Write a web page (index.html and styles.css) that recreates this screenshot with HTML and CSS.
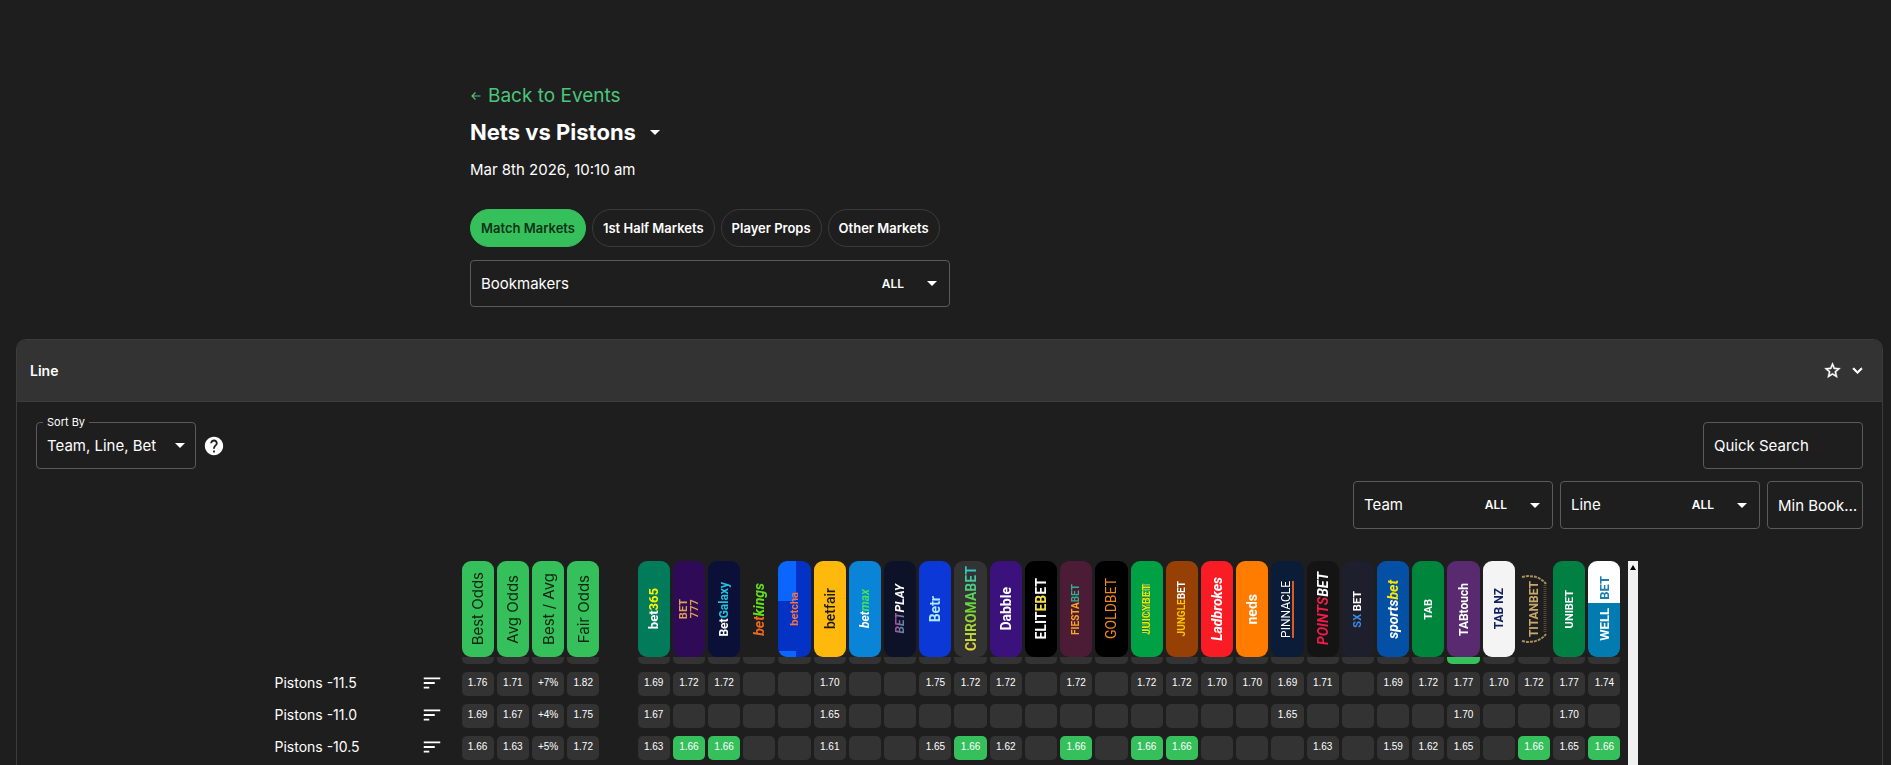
FILE: index.html
```html
<!DOCTYPE html>
<html lang="en">

<head>
    <meta charset="UTF-8">
    <meta name="viewport" content="width=device-width, initial-scale=1.0">
    <title>Nets vs Pistons</title>
    <link rel="stylesheet" href="styles.css">
</head>

<body>
    <header class="event">
        <a class="back" href="#">
            <svg width="12" height="12" viewBox="0 0 12 12"><path d="M10.5 6H2M5.5 2.5L2 6l3.5 3.5" fill="none" stroke="currentColor" stroke-width="1.2"/></svg>
            Back to Events
        </a>
        <h1>Nets vs Pistons
            <button class="icon-btn" aria-label="Change event"><svg class="caret" viewBox="0 0 10 5"><path d="M0 0h10L5 5z"/></svg></button>
        </h1>
        <div class="date">Mar 8th 2026, 10:10 am</div>
        <nav class="tabs">
            <button class="tab active">Match Markets</button>
            <button class="tab">1st Half Markets</button>
            <button class="tab">Player Props</button>
            <button class="tab">Other Markets</button>
        </nav>
        <button class="field bookmakers"><span>Bookmakers</span><b>ALL</b><svg class="caret" viewBox="0 0 10 5"><path d="M0 0h10L5 5z"/></svg></button>
    </header>

    <section class="panel">
        <div class="panel-head">
            <h2>Line</h2>
            <button class="icon-btn" aria-label="Favourite"><svg width="19" height="19" viewBox="0 0 24 24"><path fill="currentColor" stroke="currentColor" stroke-width=".5" d="M22 9.24l-7.19-.62L12 2 9.19 8.63 2 9.24l5.46 4.73L5.82 21 12 17.27 18.18 21l-1.63-7.03L22 9.24zM12 15.4l-3.76 2.27 1-4.28-3.32-2.88 4.38-.38L12 6.1l1.71 4.04 4.38.38-3.32 2.88 1 4.28L12 15.4z"/></svg></button>
            <button class="icon-btn" aria-label="Collapse"><svg width="19" height="19" viewBox="0 0 24 24"><path fill="currentColor" stroke="currentColor" d="M7.41 8.59L12 13.17l4.59-4.58L18 10l-6 6-6-6z"/></svg></button>
        </div>

        <div class="toolbar">
            <div class="sort">
                <label for="sort">Sort By</label>
                <select id="sort" class="field">
                    <option>Team, Line, Bet</option>
                </select>
                <svg class="caret" viewBox="0 0 10 5"><path d="M0 0h10L5 5z"/></svg>
            </div>
            <button class="icon-btn" aria-label="Help"><svg width="22" height="22" viewBox="0 0 24 24"><path fill="currentColor" d="M12 2C6.48 2 2 6.48 2 12s4.48 10 10 10 10-4.48 10-10S17.52 2 12 2zm1 17h-2v-2h2v2zm2.07-7.75l-.9.92C13.45 12.9 13 13.5 13 15h-2v-.5c0-1.1.45-2.1 1.17-2.83l1.24-1.26c.37-.36.59-.86.59-1.41 0-1.1-.9-2-2-2s-2 .9-2 2H8c0-2.21 1.79-4 4-4s4 1.79 4 4c0 .88-.36 1.68-.93 2.25z"/></svg></button>
            <input class="field search" type="text" placeholder="Quick Search" aria-label="Quick Search">
        </div>

        <div class="filters">
            <button class="field filter"><span>Team</span><b>ALL</b><svg class="caret" viewBox="0 0 10 5"><path d="M0 0h10L5 5z"/></svg></button>
            <button class="field filter"><span>Line</span><b>ALL</b><svg class="caret" viewBox="0 0 10 5"><path d="M0 0h10L5 5z"/></svg></button>
            <input class="field min" type="text" placeholder="Min Bookmakers" aria-label="Min Bookmakers">
        </div>

        <div class="odds">
            <table>
                <thead>
                    <tr>
                        <td></td>
                        <td></td>
                        <th class="stat"><span>Best Odds</span></th>
                        <th class="stat"><span>Avg Odds</span></th>
                        <th class="stat"><span>Best / Avg</span></th>
                        <th class="stat"><span>Fair Odds</span></th>
                        <td></td>
                        <th class="bet365"><span class="s13">bet<i>365</i></span></th>
                        <th class="bet777"><span class="s11">BET<br>777</span></th>
                        <th class="betgalaxy"><span class="s12">Bet<i>Galaxy</i></span></th>
                        <th class="betkings"><span class="s14 slant">bet<i>kings</i></span></th>
                        <th class="betcha"><span class="s11">betcha</span></th>
                        <th class="betfair"><span class="s14">betfair</span></th>
                        <th class="betmax"><span class="s12 slant">bet<i>max</i></span></th>
                        <th class="betplay"><span class="s12 slant"><i>BET</i>PLAY</span></th>
                        <th class="betr"><span class="s14">Betr</span></th>
                        <th class="chromabet"><span class="s14">CHROMABET</span></th>
                        <th class="dabble"><span class="s14">Dabble</span></th>
                        <th class="elitebet"><span class="s14">ELIT<i>EB</i>ET</span></th>
                        <th class="fiestabet"><span class="s10">FIESTA<i>BET</i></span></th>
                        <th class="goldbet"><span class="s14">GOLDBET</span></th>
                        <th class="juicybet"><span class="s11">JUICYBET</span></th>
                        <th class="junglebet"><span class="s10">JUNGLE<i>BET</i></span></th>
                        <th class="ladbrokes"><span class="s14 slant">Ladbrokes</span></th>
                        <th class="neds"><span class="s14">neds</span></th>
                        <th class="pinnacle"><span class="s12">PINNACLE</span></th>
                        <th class="pointsbet"><span class="s14 slant"><i>POINTS</i>BET</span></th>
                        <th class="sxbet"><span class="s11"><i>SX</i> BET</span></th>
                        <th class="sportsbet"><span class="s14 slant">sports<i>bet</i></span></th>
                        <th class="tab-au"><span class="s11">TAB</span></th>
                        <th class="tabtouch"><span class="s12">TABtouch</span></th>
                        <th class="tabnz"><span class="s12">TAB NZ</span></th>
                        <th class="titanbet">
                            <span class="s12">TITANBET</span>
                            <svg width="28" height="70" viewBox="0 0 28 70" fill="none" stroke="#a98f5e"><path d="M2 3c8-2 18-1 24 7M2 67c8 2 18 1 24-7" stroke-width="2" stroke-dasharray="3 1"/><path d="M25 11v48" stroke="#554a38" stroke-width="3" stroke-dasharray="1 1"/></svg>
                        </th>
                        <th class="unibet"><span class="s11">UNIBET</span></th>
                        <th class="wellbet"><span class="s13">BET</span><span class="s13">WELL</span></th>
                    </tr>
                </thead>
                <tbody id="rows"></tbody>
            </table>
            <div class="scrollbar"><svg width="6" height="5" viewBox="0 0 6 5"><path d="M3 0l3 5H0z"/></svg></div>
        </div>
    </section>

    <script src="script.js"></script>
</body>

</html>
```
FILE: styles.css
```css
* {
    box-sizing: border-box;
}

body {
    margin: 0;
    min-height: 100vh;
    padding: 80px 8px 0 16px;
    display: flex;
    flex-direction: column;
    background-color: #1e1e1e;
    color: #fff;
    font-family: Inter, sans-serif;
    font-size: 15px;
    line-height: 20px;
}

button,
input,
select {
    font: inherit;
    color: inherit;
    background: none;
    border: none;
    padding: 0;
}

h1,
h2 {
    margin: 0;
}

.icon-btn {
    display: flex;
}

.caret {
    width: 10px;
    height: 5px;
    fill: #fff;
}

/* event header */
.event {
    width: 480px;
    margin-left: 454px;
    display: flex;
    flex-direction: column;
    align-items: flex-start;
}

.back {
    display: flex;
    align-items: center;
    gap: 6px;
    font-size: 19px;
    line-height: 32px;
    color: #4cc57a;
    text-decoration: none;
}

h1 {
    display: flex;
    align-items: center;
    gap: 14px;
    margin-top: 3px;
    font-size: 22px;
    line-height: 34px;
}

.date {
    margin-top: 11px;
}

.tabs {
    display: flex;
    gap: 6px;
    margin-top: 29px;
    white-space: nowrap;
}

.tab {
    height: 38px;
    padding: 0 10px;
    border: 1px solid #3a3a3a;
    border-radius: 19px;
    font-size: 13px;
    font-weight: 600;
}

.tab.active {
    background-color: #36c05c;
    border-color: #36c05c;
    color: #0c3315;
}

.field {
    height: 47px;
    border: 1px solid #5a5a5a;
    border-radius: 4px;
    padding: 0 10px;
    display: flex;
    align-items: center;
    text-align: left;
}

.field span {
    flex: 1;
}

.field b {
    font-size: 12px;
    font-weight: 600;
    margin-right: 23px;
}

.field::placeholder {
    color: #fff;
    opacity: 1;
    text-overflow: ellipsis;
}

.bookmakers {
    width: 100%;
    margin-top: 13px;
    padding-right: 12px;
}

/* market panel */
.panel {
    flex: 1;
    display: flex;
    flex-direction: column;
    margin-top: 32px;
    border: 1px solid #3c3c3c;
    border-bottom: none;
    border-radius: 10px 10px 0 0;
}

.panel-head {
    display: flex;
    align-items: center;
    gap: 6px;
    height: 62px;
    padding: 0 15px 0 13px;
    background-color: #333;
    border-bottom: 1px solid #3c3c3c;
    border-radius: 9px 9px 0 0;
}

h2 {
    flex: 1;
    font-size: 14px;
    font-weight: 600;
}

.toolbar {
    display: flex;
    align-items: center;
    gap: 7px;
    padding: 20px 19px 0;
}

.sort {
    position: relative;
    width: 160px;
}

.sort label {
    position: absolute;
    left: 7px;
    top: -8px;
    padding: 0 4px;
    background-color: #1e1e1e;
    font-size: 11px;
    line-height: 16px;
}

.sort select {
    width: 100%;
    appearance: none;
}

.sort .caret {
    position: absolute;
    right: 11px;
    top: 21px;
}

.search {
    width: 160px;
    margin-left: auto;
}

.filters {
    display: flex;
    justify-content: flex-end;
    gap: 7px;
    padding: 12px 19px 0;
}

.filters .field {
    height: 48px;
}

.filter {
    width: 200px;
    padding-right: 12px;
}

.filters .min {
    width: 96px;
    padding-right: 4px;
    text-overflow: ellipsis;
}

/* odds table */
.odds {
    flex: 1;
    display: flex;
    width: 1376px;
    max-width: 100%;
    margin: 32px auto 0;
    padding-left: 13px;
    gap: 7px;
}

table,
tbody {
    display: block;
    flex: 1;
}

tr {
    display: grid;
    grid-template-columns: 131px 50px repeat(33, 1fr);
    column-gap: 3px;
}

thead {
    display: block;
    position: relative;
    z-index: 1;
    background-color: #1e1e1e;
}

/* first row sits scrolled under the header */
tbody {
    margin-top: -17px;
    display: flex;
    flex-direction: column;
    gap: 8px;
}

th,
td {
    min-width: 0;
    padding: 0;
}

tbody tr {
    height: 24px;
}

tbody td {
    font-family: "Liberation Sans", Arial, sans-serif;
    font-size: 10px;
    line-height: 22px;
    text-align: center;
}

tbody th {
    font-size: 14px;
    font-weight: 400;
    text-align: left;
    line-height: 22px;
    white-space: nowrap;
}

.cell {
    background-color: #333;
    border-radius: 5px;
}

.best {
    background-color: #36c05c;
}

.sorter {
    height: 24px;
    padding-right: 4px;
}

thead th {
    position: relative;
    height: 96px;
    border-radius: 9px;
    display: flex;
    align-items: center;
    justify-content: center;
    font-family: Roboto, "Liberation Sans", sans-serif;
    overflow: hidden;
}

thead th span {
    writing-mode: vertical-rl;
    transform: rotate(180deg);
    white-space: nowrap;
    line-height: 1;
    text-align: center;
}

thead th i {
    font-style: inherit;
}

.s10 { font-size: 10px; }
.s11 { font-size: 11px; }
.s12 { font-size: 12px; }
.s13 { font-size: 13px; }
.s14 { font-size: 14px; }
.slant { font-style: italic; }

thead .stat {
    background-color: #36c05c;
    color: #10240f;
    font: 400 15px Inter, sans-serif;
}

/* bookmaker badges */
.bet365 { background: #027b5b; }
.bet365 i { color: #fff200; }
.bet777 { background: #2f0b57; color: #e0a050; }
.betgalaxy { background: #0a1038; }
.betgalaxy i { color: #25c0dc; }
.betkings { color: #f06a1c; }
.betkings i { color: #62e01c; }
.betcha {
    background: linear-gradient(#0a66ff 0 0) 0 0 / 18px 40px no-repeat,
        linear-gradient(#0a66ff 0 0) 0 100% / 18px 6px no-repeat,
        #0432c4;
    color: #f0714a;
}
.betfair { background: #ffb80c; color: #1a1a1a; }
.betmax { background: #0a84d6; }
.betmax i { color: #3fe05a; }
.betplay { background: #0e1228; }
.betplay i {
    background: linear-gradient(to right, #3fa0b0, #c0409c);
    background-clip: text;
    color: transparent;
}
.betr { background: #0c38d8; color: #a8ecff; }
.chromabet { background: #333; }
.chromabet span {
    background: linear-gradient(#e8d838, #6ed830 50%, #2cc4d0);
    background-clip: text;
    color: transparent;
}
.dabble { background: #3b127c; }
.elitebet { background: #000; }
.elitebet i { color: #f5e04a; }
.fiestabet { background: #4c1c36; color: #fba81c; }
.fiestabet i { color: #2cb48c; }
.goldbet { background: #000; color: #f08a1c; }
.juicybet { background: #00a044; color: #e0ea10; }
.juicybet span {
    text-shadow: 1px 0 #0a7a30, -1px 0 #0a7a30, 2px 0 #a8e070, -2px 0 #a8e070;
}
.junglebet { background: #964006; color: #ffc400; }
.junglebet i { color: #fff; }
.ladbrokes { background: #fa1c24; }
.neds { background: #ff7c00; }
.pinnacle { background: #0a1c38; }
.pinnacle span { border-left: 2px solid #e05a20; }
.goldbet,
.pinnacle { font-weight: 400; }
.betfair { font-weight: 500; }
.pointsbet { background: #141414; }
.pointsbet i { color: #ee1c48; }
.sxbet { background: #1e1f2c; }
.sxbet i { color: #3c8ce0; }
.sportsbet { background: #0450a4; }
.sportsbet i { color: #ffe800; }
.tab-au { background: #00853c; }
.tabtouch { background: #5a2a70; }
.tabnz { background: #f4f4f4; color: #10205c; }
.titanbet { color: #c8a86c; }
.titanbet svg { position: absolute; }
.unibet { background: #027f43; }
.wellbet { background: linear-gradient(#fff 44%, #027cb0 44%); }
thead .wellbet {
    flex-direction: column;
    gap: 8px;
    padding-bottom: 2px;
}
.wellbet span:first-child { color: #1c80ac; }

.scrollbar {
    width: 10px;
    background-color: #f1f1f1;
    text-align: center;
    line-height: 8px;
}
```
FILE: script.js
```js
const rows = [
    ['Pistons -12.0', [], [], [24]],
    ['Pistons -11.5', ['1.76', '1.71', '+7%', '1.82'], ['1.69', '1.72', '1.72', '', '', '1.70', '', '', '1.75', '1.72', '1.72', '', '1.72', '', '1.72', '1.72', '1.70', '1.70', '1.69', '1.71', '', '1.69', '1.72', '1.77', '1.70', '1.72', '1.77', '1.74'], []],
    ['Pistons -11.0', ['1.69', '1.67', '+4%', '1.75'], ['1.67', '', '', '', '', '1.65', '', '', '', '', '', '', '', '', '', '', '', '', '1.65', '', '', '', '', '1.70', '', '', '1.70', ''], []],
    ['Pistons -10.5', ['1.66', '1.63', '+5%', '1.72'], ['1.63', '1.66', '1.66', '', '', '1.61', '', '', '1.65', '1.66', '1.62', '', '1.66', '', '1.66', '1.66', '', '', '', '1.63', '', '1.59', '1.62', '1.65', '', '1.66', '1.65', '1.66'], [2, 3, 10, 13, 15, 16, 26, 28]]
]

function cells(values, count, best) {
    let html = ''
    for (let i = 0; i < count; i++)
        html += `<td class="cell${best.includes(i + 1) ? ' best' : ''}">${values[i] || ''}</td>`
    return html
}

for (let [name, stats, odds, best] of rows) {
    let tr = document.createElement('tr')
    tr.innerHTML = `<th>${name}</th>
        <td class="sorter"><svg width="22" height="22" viewBox="0 0 24 24"><path fill="#fff" d="M3 18h6v-2H3v2zM3 6v2h18V6H3zm0 7h12v-2H3v2z"/></svg></td>
        ${cells(stats, 4, [])}<td></td>${cells(odds, 28, best)}`
    document.querySelector('#rows').append(tr)
}
```
